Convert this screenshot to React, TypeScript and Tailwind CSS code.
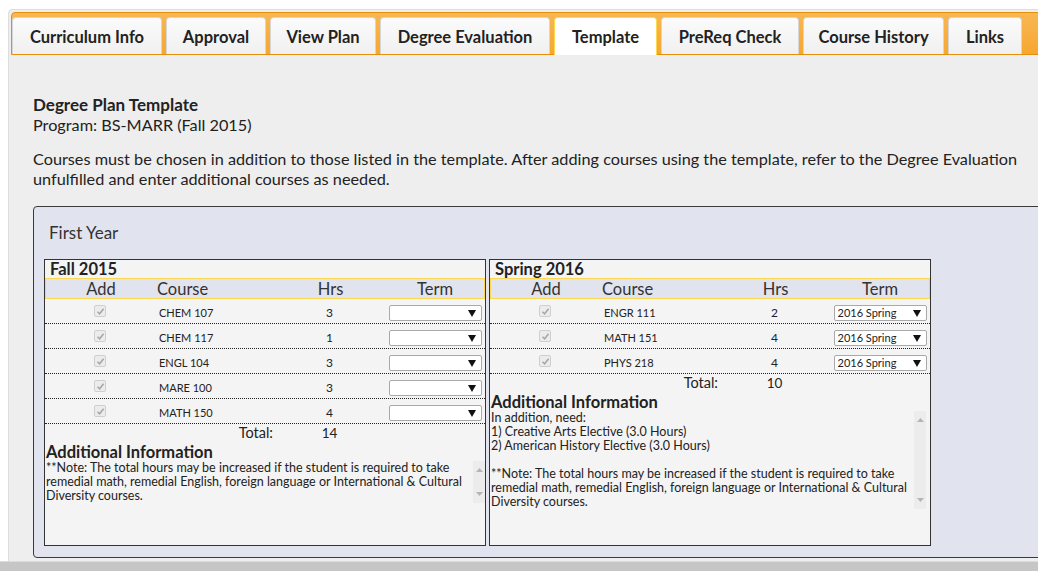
import React from "react";

const FONT = { fontFamily: "Lato, 'Open Sans', sans-serif" };

const tabs = [
  { label: "Curriculum Info", w: "w-[150px]" },
  { label: "Approval", w: "w-[100px]" },
  { label: "View Plan", w: "w-[106px]" },
  { label: "Degree Evaluation", w: "w-[170px]" },
  { label: "Template", w: "w-[103px]", active: true },
  { label: "PreReq Check", w: "w-[138px]" },
  { label: "Course History", w: "w-[141px]" },
  { label: "Links", w: "w-[74px]" },
];

type Row = { c: string; h: number };

const fall: Row[] = [
  { c: "CHEM 107", h: 3 },
  { c: "CHEM 117", h: 1 },
  { c: "ENGL 104", h: 3 },
  { c: "MARE 100", h: 3 },
  { c: "MATH 150", h: 4 },
];
const spring: Row[] = [
  { c: "ENGR 111", h: 2 },
  { c: "MATH 151", h: 4 },
  { c: "PHYS 218", h: 4 },
];

const noteLines = [
  "**Note: The total hours may be increased if the student is required to take",
  "remedial math, remedial English, foreign language or International & Cultural",
  "Diversity courses.",
];

function Check() {
  return (
    <span className="flex h-[12px] w-[12px] items-center justify-center rounded-[2px] border border-[#cfcfcf] bg-[#ececec]">
      <svg width="9" height="9" viewBox="0 0 9 9">
        <path d="M1.5 4.8 L3.6 6.8 L7.6 1.8" fill="none" stroke="#a6a6a6" strokeWidth="1.5" />
      </svg>
    </span>
  );
}

function Select({ value }: { value: string }) {
  return (
    <div className="mx-auto flex h-[16px] w-[93px] items-center justify-between rounded-[2px] border border-[#a9a9a9] bg-white pl-[3px] pr-[5px] text-[11px] leading-[14px] text-[#222]">
      <span>{value}</span>
      <svg width="8" height="7" viewBox="0 0 8 7">
        <polygon points="0,0 8,0 4,7" fill="#111" />
      </svg>
    </div>
  );
}

function ScrollBar() {
  return (
    <div className="flex w-[12px] flex-col items-center justify-between bg-[#ececec] py-[7px]">
      <svg width="7" height="4" viewBox="0 0 7 4">
        <polygon points="0,4 7,4 3.5,0" fill="#b4b4b4" />
      </svg>
      <svg width="7" height="4" viewBox="0 0 7 4">
        <polygon points="0,0 7,0 3.5,4" fill="#b4b4b4" />
      </svg>
    </div>
  );
}

function Semester({
  title,
  rows,
  total,
  term,
  info,
  spring: isSpring,
}: {
  title: string;
  rows: Row[];
  total: number;
  term: string;
  info: string[];
  spring?: boolean;
}) {
  return (
    <div className="h-[287px] w-[442px] border border-[#333] bg-[#f4f4f4] text-[#333]">
      <div className="h-[18px] pl-[5px] text-[16.5px] font-bold leading-[19px] text-[#222]">{title}</div>
      <div className="grid h-[21px] grid-cols-[110px_119px_111px_1fr] border border-[#fbd850] bg-[#e1e4ee] text-[16.5px] leading-[20px] text-[#333]">
        <div className="text-center">Add</div>
        <div className="pl-[1px]">Course</div>
        <div className="text-center">Hrs</div>
        <div className="text-center">Term</div>
      </div>
      {rows.map((r) => (
        <div
          key={r.c}
          className="grid h-[25px] grid-cols-[110px_119px_111px_1fr] items-start border-b border-dotted border-[#222] pt-[6px] text-[11px] leading-[16px] text-[#222]"
        >
          <div className="flex justify-center">
            <Check />
          </div>
          <div className="pl-[4px]">{r.c}</div>
          <div className="text-center text-[12px]">{r.h}</div>
          <div>
            <Select value={term} />
          </div>
        </div>
      ))}
      <div className="grid h-[18px] grid-cols-[110px_119px_111px_1fr] text-[14.5px] leading-[18px] text-[#222]">
        <div />
        <div className="pr-[1px] text-right">Total:</div>
        <div className="text-center text-[13.5px]">{total}</div>
        <div />
      </div>
      <div className="pl-[1px] text-[16.5px] font-bold leading-[20px] text-[#222]">Additional Information</div>
      <div className={`-mt-[1px] flex ${isSpring ? "pr-[4px]" : ""}`}>
        <div className="flex-1 whitespace-nowrap pl-[1px] text-[12.5px] leading-[14px] text-[#222]">
          {info.map((l, i) => (
            <div key={i} className="h-[14px]">
              {l}
            </div>
          ))}
        </div>
        <ScrollBar />
      </div>
    </div>
  );
}

export default function App() {
  return (
    <div className="flex h-[571px] w-[1038px] flex-col overflow-hidden bg-white" style={FONT}>
      <div className="h-[561px] overflow-hidden pl-[8px] pt-[9px]">
        <div className="h-[600px] w-[1200px] rounded-tl-[4px] border border-[#dddddd] bg-[#eeeeee]">
          <div className="px-[2px] pt-[2px]">
            <div className="flex h-[43px] items-end gap-[4px] rounded-tl-[4px] border border-[#e78f08] bg-gradient-to-b from-[#f8b752] to-[#f6a72e]">
              {tabs.map((t) => (
                <div
                  key={t.label}
                  className={`flex ${t.w} items-center justify-center rounded-t-[4px] border border-b-0 pt-[2px] text-[16.5px] font-bold text-[#222] ${
                    t.active
                      ? "mb-[-1px] h-[38px] border-[#fbd850] bg-white"
                      : "h-[37px] border-[#d6d6d6] bg-gradient-to-b from-[#fbfbfb] to-[#f0f0f0]"
                  }`}
                >
                  {t.label}
                </div>
              ))}
            </div>
          </div>
          <div className="px-[24px] pt-[40px] text-[16.25px] leading-[20px] text-[#222]">
            <div className="text-[17px] font-bold">Degree Plan Template</div>
            <div>Program: BS-MARR (Fall 2015)</div>
            <div className="mt-[14px] whitespace-nowrap">
              <div>
                Courses must be chosen in addition to those listed in the template. After adding courses using the template, refer to the Degree Evaluation
              </div>
              <div>unfulfilled and enter additional courses as needed.</div>
            </div>
            <div className="mt-[17px] w-[1130px] rounded-[4px] border border-[#3a3a3a] bg-[#e1e4ee] pb-[11px] pl-[10px] pt-[16px]">
              <div className="pl-[5px] text-[17px] leading-[20px] text-[#333]">First Year</div>
              <div className="mt-[16px] flex gap-[3px]">
                <Semester title="Fall 2015" rows={fall} total={14} term="" info={noteLines} />
                <Semester
                  title="Spring 2016"
                  rows={spring}
                  total={10}
                  term="2016 Spring"
                  spring
                  info={[
                    "In addition, need:",
                    "1) Creative Arts Elective (3.0 Hours)",
                    "2) American History Elective (3.0 Hours)",
                    "",
                    ...noteLines,
                  ]}
                />
              </div>
            </div>
          </div>
        </div>
      </div>
      <div className="h-[10px] border-t border-[#dcdcdc] bg-[#c6c6c6]" />
    </div>
  );
}
